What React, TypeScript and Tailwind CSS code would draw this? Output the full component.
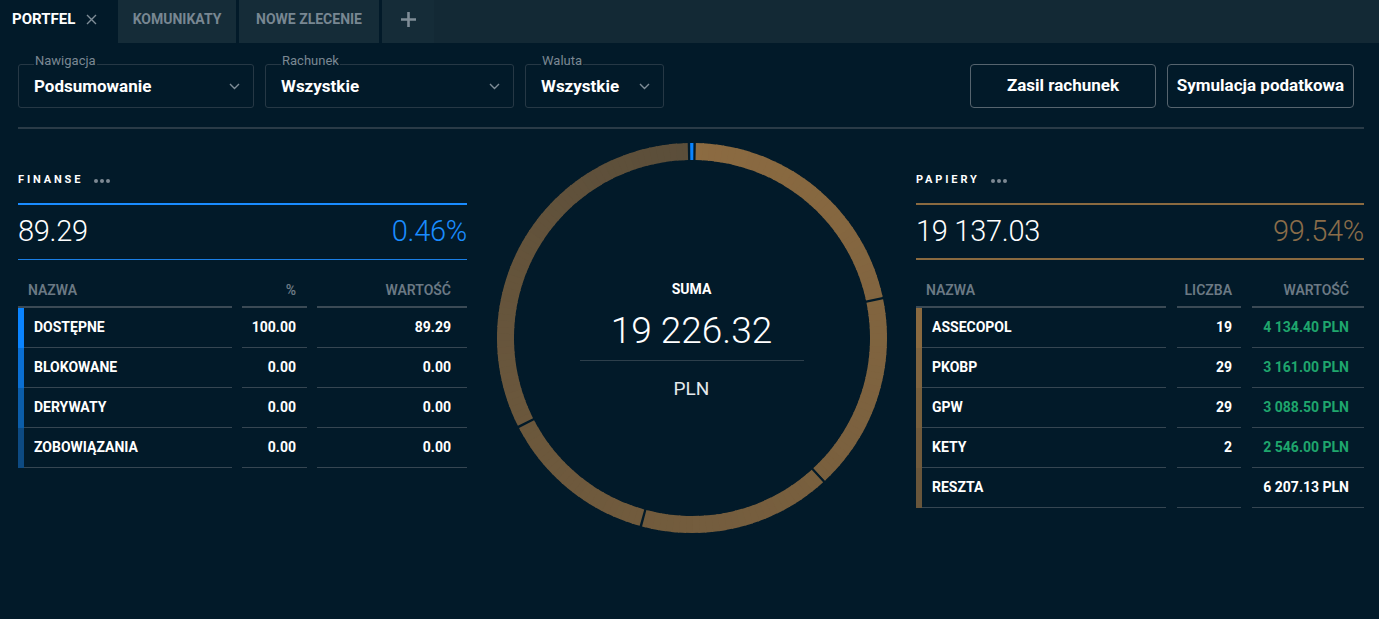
import React from 'react';

const TOTAL = 19226.32;

function polar(cx: number, cy: number, r: number, deg: number) {
  const t = (deg * Math.PI) / 180;
  return [cx + r * Math.sin(t), cy - r * Math.cos(t)];
}

function arcPath(cx: number, cy: number, r: number, a0: number, a1: number) {
  const [x0, y0] = polar(cx, cy, r, a0);
  const [x1, y1] = polar(cx, cy, r, a1);
  const large = a1 - a0 > 180 ? 1 : 0;
  return `M ${x0.toFixed(3)} ${y0.toFixed(3)} A ${r} ${r} 0 ${large} 1 ${x1.toFixed(3)} ${y1.toFixed(3)}`;
}

function goldAt(deg: number) {
  const t = Math.min(1, Math.max(0, deg / 360));
  const a = [0x8c, 0x6b, 0x41];
  const b = [0x5b, 0x4e, 0x3a];
  const c = a.map((v, i) => Math.round(v + (b[i] - v) * t));
  return `rgb(${c[0]},${c[1]},${c[2]})`;
}

function Donut() {
  const cx = 195;
  const cy = 195;
  const r = 186.5;
  const sw = 17;
  const values = [
    { v: 89.29, blue: true },
    { v: 4134.4 },
    { v: 3161.0 },
    { v: 3088.5 },
    { v: 2546.0 },
    { v: 6207.13 },
  ];
  const offset = -0.9;
  const half = 0.36;
  const paths: React.ReactNode[] = [];
  let acc = 0;
  values.forEach((s, si) => {
    const start = (acc / TOTAL) * 360 + offset + half;
    acc += s.v;
    const end = (acc / TOTAL) * 360 + offset - half;
    if (s.blue) {
      paths.push(
        <path key={`b${si}`} d={arcPath(cx, cy, r, start, end)} stroke="#0a84ff" strokeWidth={sw} fill="none" />
      );
      return;
    }
    const step = 2;
    for (let a = start; a < end; a += step) {
      const b = Math.min(a + step + 0.4, end);
      const mid = (a + Math.min(a + step, end)) / 2;
      paths.push(
        <path
          key={`g${si}-${a.toFixed(2)}`}
          d={arcPath(cx, cy, r, a, b)}
          stroke={goldAt(mid - offset)}
          strokeWidth={sw}
          fill="none"
        />
      );
    }
  });
  return (
    <svg width="390" height="390" viewBox="0 0 390 390">
      {paths}
    </svg>
  );
}

function Chevron() {
  return (
    <svg width="11" height="7" viewBox="0 0 11 7">
      <path d="M1 1l4.5 4.5L10 1" fill="none" stroke="#7f8d97" strokeWidth="1.4" />
    </svg>
  );
}

function Dots() {
  return (
    <div className="flex items-center gap-[2px] ml-[11px] mt-[2px]">
      <span className="w-[4px] h-[4px] rounded-full bg-[#7d8893]" />
      <span className="w-[4px] h-[4px] rounded-full bg-[#7d8893]" />
      <span className="w-[4px] h-[4px] rounded-full bg-[#7d8893]" />
    </div>
  );
}

function Select({ label, value, width }: { label: string; value: string; width: string }) {
  return (
    <div className={`relative h-[44px] ${width} border border-[#263845] rounded-[3px] flex items-center justify-between pl-[15px] pr-[13px]`}>
      <span className="absolute left-[15px] -top-[12px] px-[1px] bg-[#021a29] text-[13px] leading-[16px] text-[#7b8893]">
        {label}
      </span>
      <span className="text-[17px] font-bold text-white pt-[2px]">{value}</span>
      <Chevron />
    </div>
  );
}

type Row = { name: string; bar: string; c2: string; c3: string; green?: boolean };

function Panel({
  title,
  value,
  pct,
  accent,
  pctColor,
  bottomLine,
  cols,
  gap,
  heads,
  rows,
  pr2,
  pr3,
}: {
  title: string;
  value: string;
  pct: string;
  accent: string;
  pctColor: string;
  bottomLine: string;
  cols: string;
  gap: string;
  heads: [string, string, string];
  rows: Row[];
  pr2: string;
  pr3: string;
}) {
  return (
    <div className="flex flex-col">
      <div className="flex items-center h-[16px]">
        <span className="text-[11px] font-bold tracking-[0.26em] text-white leading-[16px]">{title}</span>
        <Dots />
      </div>
      <div className={`mt-[15px] h-[2px] ${accent}`} />
      <div className={`h-[55px] flex items-center justify-between ${bottomLine}`}>
        <span className="text-[29px] font-light text-white tracking-[-0.01em]">{value}</span>
        <span className={`text-[29px] font-light ${pctColor} tracking-[-0.01em]`}>{pct}</span>
      </div>
      <div className={`grid ${cols} ${gap}`}>
        <div className="h-[48px] flex items-end pb-[5px] pl-[10px] border-b-2 border-[#3b4a55] text-[14px] font-semibold text-[#6b7984]">
          {heads[0]}
        </div>
        <div className={`h-[48px] flex items-end justify-end pb-[5px] ${pr2} border-b-2 border-[#3b4a55] text-[14px] font-semibold text-[#6b7984]`}>
          {heads[1]}
        </div>
        <div className={`h-[48px] flex items-end justify-end pb-[5px] ${pr3} border-b-2 border-[#3b4a55] text-[14px] font-semibold text-[#6b7984]`}>
          {heads[2]}
        </div>
        {rows.map((r) => (
          <React.Fragment key={r.name}>
            <div className="h-[40px] flex">
              <div className="w-[6px] h-full" style={{ backgroundColor: r.bar }} />
              <div className="flex-1 flex items-center pl-[10px] border-b border-[#364652] text-[14px] font-bold text-white">
                {r.name}
              </div>
            </div>
            <div className={`h-[40px] flex items-center justify-end ${pr2} border-b border-[#364652] text-[14px] font-bold text-white`}>
              {r.c2}
            </div>
            <div
              className={`h-[40px] flex items-center justify-end ${pr3} border-b border-[#364652] text-[14px] font-bold ${
                r.green ? 'text-[#1fa66d]' : 'text-white'
              }`}
            >
              {r.c3}
            </div>
          </React.Fragment>
        ))}
      </div>
    </div>
  );
}

export default function App() {
  return (
    <div className="w-full h-[619px] bg-[#021a29] font-['Roboto','Liberation_Sans',sans-serif] overflow-hidden">
      {/* Tabs */}
      <div className="h-[43px] bg-[#132935] flex">
        <div className="w-[118px] h-full bg-[#021a29] flex items-center pl-[12px] gap-[11px] pb-[4px]">
          <span className="text-[15px] font-bold text-white">PORTFEL</span>
          <svg width="11" height="11" viewBox="0 0 11 11">
            <path d="M1 1l9 9M10 1l-9 9" stroke="#7f8d97" strokeWidth="1.4" />
          </svg>
        </div>
        <div className="w-[118px] h-full bg-[#152c38] flex items-center justify-center pb-[4px] text-[14px] font-bold text-[#788792]">
          KOMUNIKATY
        </div>
        <div className="w-[3px] h-full bg-[#021a29]" />
        <div className="w-[140px] h-full bg-[#152c38] flex items-center justify-center pb-[4px] text-[14px] font-bold text-[#788792]">
          NOWE ZLECENIE
        </div>
        <div className="w-[3px] h-full bg-[#021a29]" />
        <div className="w-[52px] h-full bg-[#152c38] flex items-center justify-center pb-[4px]">
          <svg width="15" height="15" viewBox="0 0 15 15">
            <path d="M7.5 0v15M0 7.5h15" stroke="#7f8d97" strokeWidth="2.6" />
          </svg>
        </div>
      </div>

      {/* Toolbar */}
      <div className="pl-[18px] pr-[15px]">
        <div className="mt-[21px] flex items-center">
          <div className="flex gap-[11px]">
            <Select label="Nawigacja" value="Podsumowanie" width="w-[236px]" />
            <Select label="Rachunek" value="Wszystkie" width="w-[249px]" />
            <Select label="Waluta" value="Wszystkie" width="w-[139px]" />
          </div>
          <div className="ml-auto mr-[10px] flex gap-[11px]">
            <button className="h-[44px] w-[186px] border border-[#56646e] rounded-[4px] text-[17px] font-bold text-white">
              Zasil rachunek
            </button>
            <button className="h-[44px] w-[187px] border border-[#56646e] rounded-[4px] text-[17px] font-bold text-white">
              Symulacja podatkowa
            </button>
          </div>
        </div>
        <div className="mt-[19px] h-[2px] bg-[#2a3b47]" />

        {/* Content */}
        <div className="flex">
          <div className="w-[449px] pt-[43px]">
            <Panel
              title="FINANSE"
              value="89.29"
              pct="0.46%"
              accent="bg-[#1a8cff]"
              pctColor="text-[#1a8cff]"
              bottomLine="border-b border-[#1a7fe6]"
              cols="grid-cols-[214px_65px_150px]"
              gap="gap-x-[10px]"
              heads={['NAZWA', '%', 'WARTOŚĆ']}
              pr2="pr-[11px]"
              pr3="pr-[16px]"
              rows={[
                { name: 'DOSTĘPNE', bar: '#0a84ff', c2: '100.00', c3: '89.29' },
                { name: 'BLOKOWANE', bar: '#0a6fd3', c2: '0.00', c3: '0.00' },
                { name: 'DERYWATY', bar: '#0b5da9', c2: '0.00', c3: '0.00' },
                { name: 'ZOBOWIĄZANIA', bar: '#0d4a82', c2: '0.00', c3: '0.00' },
              ]}
            />
          </div>
          <div className="flex-1 flex justify-center pt-[14px]">
            <div className="relative w-[390px] h-[390px]">
              <Donut />
              <div className="absolute inset-0 flex flex-col items-center justify-center pt-[4px]">
                <span className="text-[14px] leading-[20px] font-bold text-white">SUMA</span>
                <span className="mt-[10px] text-[37px] leading-[44px] font-light text-white">19 226.32</span>
                <div className="mt-[7px] w-[224px] h-[1px] bg-[#2d3f4b]" />
                <span className="mt-[16px] text-[19px] leading-[24px] text-[#e4e9ec]">PLN</span>
              </div>
            </div>
          </div>
          <div className="w-[448px] pt-[43px]">
            <Panel
              title="PAPIERY"
              value="19 137.03"
              pct="99.54%"
              accent="bg-[#8a6a40]"
              pctColor="text-[#8a6d49]"
              bottomLine="border-b-2 border-[#8a6a40]"
              cols="grid-cols-[250px_64px_112px]"
              gap="gap-x-[11px]"
              heads={['NAZWA', 'LICZBA', 'WARTOŚĆ']}
              pr2="pr-[9px]"
              pr3="pr-[15px]"
              rows={[
                { name: 'ASSECOPOL', bar: '#8a6a40', c2: '19', c3: '4 134.40 PLN', green: true },
                { name: 'PKOBP', bar: '#7f6440', c2: '29', c3: '3 161.00 PLN', green: true },
                { name: 'GPW', bar: '#775f3d', c2: '29', c3: '3 088.50 PLN', green: true },
                { name: 'KETY', bar: '#705a3c', c2: '2', c3: '2 546.00 PLN', green: true },
                { name: 'RESZTA', bar: '#69563b', c2: '', c3: '6 207.13 PLN' },
              ]}
            />
          </div>
        </div>
      </div>
    </div>
  );
}
